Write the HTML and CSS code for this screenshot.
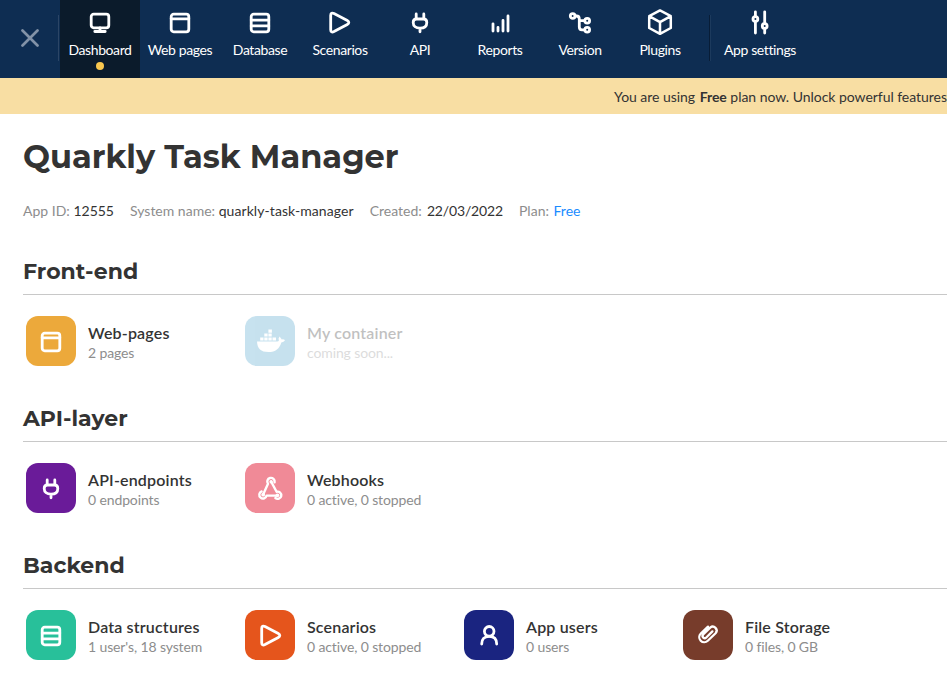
FILE: index.html
```html
<!DOCTYPE html>
<html lang="en">
<head>
<meta charset="utf-8">
<title>Quarkly Task Manager</title>
<link rel="stylesheet" href="styles.css">
</head>
<body>
<svg class="defs" aria-hidden="true">
  <symbol id="page" viewBox="0 0 24 24"><rect x="3.2" y="3.2" width="17.6" height="17.6" rx="2.5"/><path d="M3.2 7.8H20.8"/></symbol>
  <symbol id="database" viewBox="0 0 24 24"><rect x="3.2" y="3.2" width="17.6" height="17.6" rx="2.5"/><path d="M3.2 9.1H20.8M3.2 14.9H20.8"/></symbol>
  <symbol id="play" viewBox="0 0 24 24"><path d="M2.7 4.5C2.7 2.2 4 1.6 6 2.6L19.3 9.6C21.3 10.7 21.3 12.3 19.3 13.4L6 20.6C4 21.6 2.7 21 2.7 18.7Z"/></symbol>
  <symbol id="plug" viewBox="0 0 24 24"><path d="M8.2 3V8M15.8 3V8M5.2 11.5C5.2 9 6.5 8 8.5 8H15.5C17.5 8 18.8 9 18.8 11.5C18.8 15.2 16 17.2 12 17.2S5.2 15.2 5.2 11.5ZM12 17.2V20.8"/></symbol>
</svg>
<header class="topbar">
  <div class="close"><svg class="close-icon" viewBox="0 0 18 18"><path d="M1.5 1.5L16.5 16.5M16.5 1.5L1.5 16.5"/></svg></div>
  <nav class="nav">
    <a class="nav-item active"><svg class="icon" viewBox="0 0 24 24"><rect x="3.2" y="3.2" width="17.6" height="13.6" rx="2.5"/><path d="M12 17V20M6.8 20.5H17.2"/></svg>Dashboard<i class="dot"></i></a>
    <a class="nav-item"><svg class="icon"><use href="#page"/></svg>Web pages</a>
    <a class="nav-item"><svg class="icon"><use href="#database"/></svg>Database</a>
    <a class="nav-item"><svg class="icon"><use href="#play"/></svg>Scenarios</a>
    <a class="nav-item"><svg class="icon"><use href="#plug"/></svg>API</a>
    <a class="nav-item"><svg class="icon" viewBox="0 0 24 24"><path d="M5 12.8V20M10 16.3V20M15 9.5V20M20 5V20"/></svg>Reports</a>
    <a class="nav-item"><svg class="icon" viewBox="0 0 24 24"><circle cx="4.7" cy="5" r="2.4"/><circle cx="19.2" cy="9.7" r="2.4"/><circle cx="19.2" cy="18.8" r="2.4"/><path d="M7 5H8.5Q11.3 5 11.3 8V16Q11.3 18.8 14 18.8H16.7M11.3 9.7H16.7"/></svg>Version</a>
    <a class="nav-item"><svg class="icon" viewBox="0 0 24 24"><path class="thin" d="M12-.6L22.8 5.2V17L12 22.8L1.2 17V5.2ZM1.2 5.2L12 11.2L22.8 5.2M12 11.2V22.8"/></svg>Plugins</a>
    <a class="nav-item settings"><svg class="icon" viewBox="0 0 24 24"><path d="M7.4.8V5.5M7.4 10.5V22M16.7.8V12.5M16.7 17.5V22"/><circle cx="7.4" cy="8" r="2.4"/><circle cx="16.7" cy="15" r="2.4"/></svg>App settings</a>
  </nav>
</header>
<div class="banner">You are using <b>Free</b> plan now. Unlock powerful features</div>
<main class="content">
  <h1>Quarkly Task Manager</h1>
  <div class="meta">
    <span>App ID: <em>12555</em></span><span>System name: <em class="system">quarkly-task-manager</em></span><span>Created: <em class="date">22/03/2022</em></span><span>Plan: <a>Free</a></span>
  </div>
  <section class="frontend">
    <h2>Front-end</h2>
    <div class="cards">
      <div class="card"><div class="tile pages"><svg class="icon"><use href="#page"/></svg></div><div class="label"><h3>Web-pages</h3><p>2 pages</p></div></div>
      <div class="card disabled"><div class="tile container"><svg class="whale" viewBox="0 0 28 24"><path d="M0 12.5H20.2C22 12.5 22.2 11.5 21.5 9.8L22.6 7.5L24.8 10.4Q27 10 28 11.3Q26.9 13.4 24.3 13.4C22.5 19.5 18.8 23 11.3 23C4 23 .3 19.8 0 12.5Z"/><path d="M3.2 8.4H6.5V11.5H3.2ZM7.3 8.4H10.6V11.5H7.3ZM11.4 8.4H14.7V11.5H11.4ZM15.5 8.4H19V11.5H15.5ZM7.3 4.5H10.6V7.6H7.3ZM11.4 4.5H14.7V7.6H11.4ZM11.4.5H14.9V3.7H11.4Z"/></svg></div><div class="label"><h3>My container</h3><p>coming soon...</p></div></div>
    </div>
  </section>
  <section class="api">
    <h2>API-layer</h2>
    <div class="cards">
      <div class="card"><div class="tile endpoints"><svg class="icon"><use href="#plug"/></svg></div><div class="label"><h3>API-endpoints</h3><p>0 endpoints</p></div></div>
      <div class="card"><div class="tile hooks"><svg class="icon" viewBox="0 0 24 24"><path class="hook" d="M16.6 5.2A3.7 3.7 0 1 0 10 6.8L5.6 16.4M13.2 4.8L18.6 14.8A3.6 3.6 0 1 1 17.4 21M3.6 14.4A3.7 3.7 0 1 0 8.6 18.6H18.5"/><circle class="fill" cx="13.1" cy="4.8" r="1.7"/><circle class="fill" cx="5.2" cy="17.7" r="1.9"/><circle class="fill" cx="19.4" cy="18.3" r="1.9"/></svg></div><div class="label"><h3>Webhooks</h3><p>0 active, 0 stopped</p></div></div>
    </div>
  </section>
  <section class="backend">
    <h2>Backend</h2>
    <div class="cards">
      <div class="card"><div class="tile data"><svg class="icon"><use href="#database"/></svg></div><div class="label"><h3>Data structures</h3><p>1 user's, 18 system</p></div></div>
      <div class="card"><div class="tile scenarios"><svg class="icon"><use href="#play"/></svg></div><div class="label"><h3>Scenarios</h3><p>0 active, 0 stopped</p></div></div>
      <div class="card"><div class="tile users"><svg class="icon" viewBox="0 0 24 24"><circle cx="12.2" cy="7.3" r="4.8"/><path d="M4.7 20C4.7 15.2 7 12.3 12.2 12.3S19.7 15.2 19.7 20"/></svg></div><div class="label"><h3>App users</h3><p>0 users</p></div></div>
      <div class="card"><div class="tile files"><svg class="icon" viewBox="0 0 24 24"><path class="clip" d="M12 2.6L4.8 9.6A5 5 0 0 0 11.8 16.8L19.6 9.2A3.9 3.9 0 0 0 14.2 3.6L7.2 10.5A2.1 2.1 0 0 0 10.3 13.5L16.4 7.4"/></svg></div><div class="label"><h3>File Storage</h3><p>0 files, 0 GB</p></div></div>
    </div>
  </section>
</main>
</body>
</html>
```
FILE: styles.css
```css
* { box-sizing: border-box; }
body { margin: 0; background: #fff; color: #333; font: 14px/20px Lato, sans-serif; overflow: hidden; }
h1, h2, h3, p { margin: 0; }
.defs { display: none; }
.icon { display: block; width: 24px; height: 24px; flex: none; overflow: visible; fill: none; stroke: #fff; stroke-width: 2.8; stroke-linecap: round; stroke-linejoin: round; }
.thin { stroke-width: 2.5; }
.topbar { display: flex; height: 78px; background: #0e2d52; color: #fff; }
.close { width: 60px; display: flex; align-items: center; justify-content: center; background: linear-gradient(#2b4566, #2b4566) 58px 15px / 1px 46px no-repeat; }
.close-icon { width: 18px; height: 18px; margin-top: -2px; fill: none; stroke: #8292a7; stroke-width: 2.7; stroke-linecap: round; }
.nav { display: flex; }
.nav-item { position: relative; width: 80px; padding-top: 11px; display: flex; flex-direction: column; align-items: center; gap: 5px; white-space: nowrap; letter-spacing: -.4px; }
.active { background: #0b1b2b; }
.dot { position: absolute; left: 36px; top: 62px; width: 8px; height: 8px; border-radius: 50%; background: #f9c74f; }
.nav-item.settings { width: 100px; margin-left: 10px; }
.settings::before { content: ""; position: absolute; left: -1px; top: 15px; width: 1px; height: 46px; background: #081d37; box-shadow: 1px 0 #1c3a5d; }
.banner { height: 36px; padding: 9px 0 0 614px; background: #f8dea3; white-space: nowrap; letter-spacing: -.04px; }
.banner b { margin-left: 1px; }
.content { padding: 0 0 0 23px; }
h1, h2 { font-family: Montserrat, Inter, sans-serif; font-weight: 700; }
h1 { margin-top: 22px; font-size: 32px; line-height: 42px; }
.meta { display: flex; gap: 16px; margin-top: 23px; color: #8d8d8d; white-space: nowrap; }
.meta em { font-style: normal; color: #333; }
.meta .system { letter-spacing: .08px; }
.meta .date { letter-spacing: -.15px; margin-left: 1.5px; }
.meta a { color: #1a8cff; margin-left: 1px; }
.frontend { margin-top: 35px; }
section { height: 147px; }
h2 { height: 39px; padding-top: 1px; font-size: 22px; line-height: 30px; border-bottom: 1px solid #c8c8c8; }
.cards { display: flex; padding: 21px 0 0 3px; }
.card { width: 219px; flex: none; display: flex; gap: 12px; white-space: nowrap; }
.label { padding-top: 7px; }
.card h3 { font-size: 16px; line-height: 20px; font-weight: 600; letter-spacing: .17px; }
.card p { color: #8d8d8d; line-height: 20px; letter-spacing: -.12px; }
.disabled { opacity: .3; }
.tile { width: 50px; height: 50px; border-radius: 12px; display: flex; align-items: center; justify-content: center; flex: none; }
.tile .icon { margin-top: 1px; }
.tile.scenarios .icon { margin-left: 2px; }
.pages { background: #eca93b; }
.container { background: #479fca; }
.whale { width: 28px; height: 24px; fill: #fff; margin-left: 2px; }
.endpoints { background: #6a1b99; }
.hooks { background: #f08a97; }
.data { background: #28c09a; }
.scenarios { background: #e5551c; }
.users { background: #1a2480; }
.files { background: #773c2b; }
.hook { stroke-width: 2.4; }
.fill { fill: #fff; stroke: none; }
.clip { stroke-width: 2.3; }
```
